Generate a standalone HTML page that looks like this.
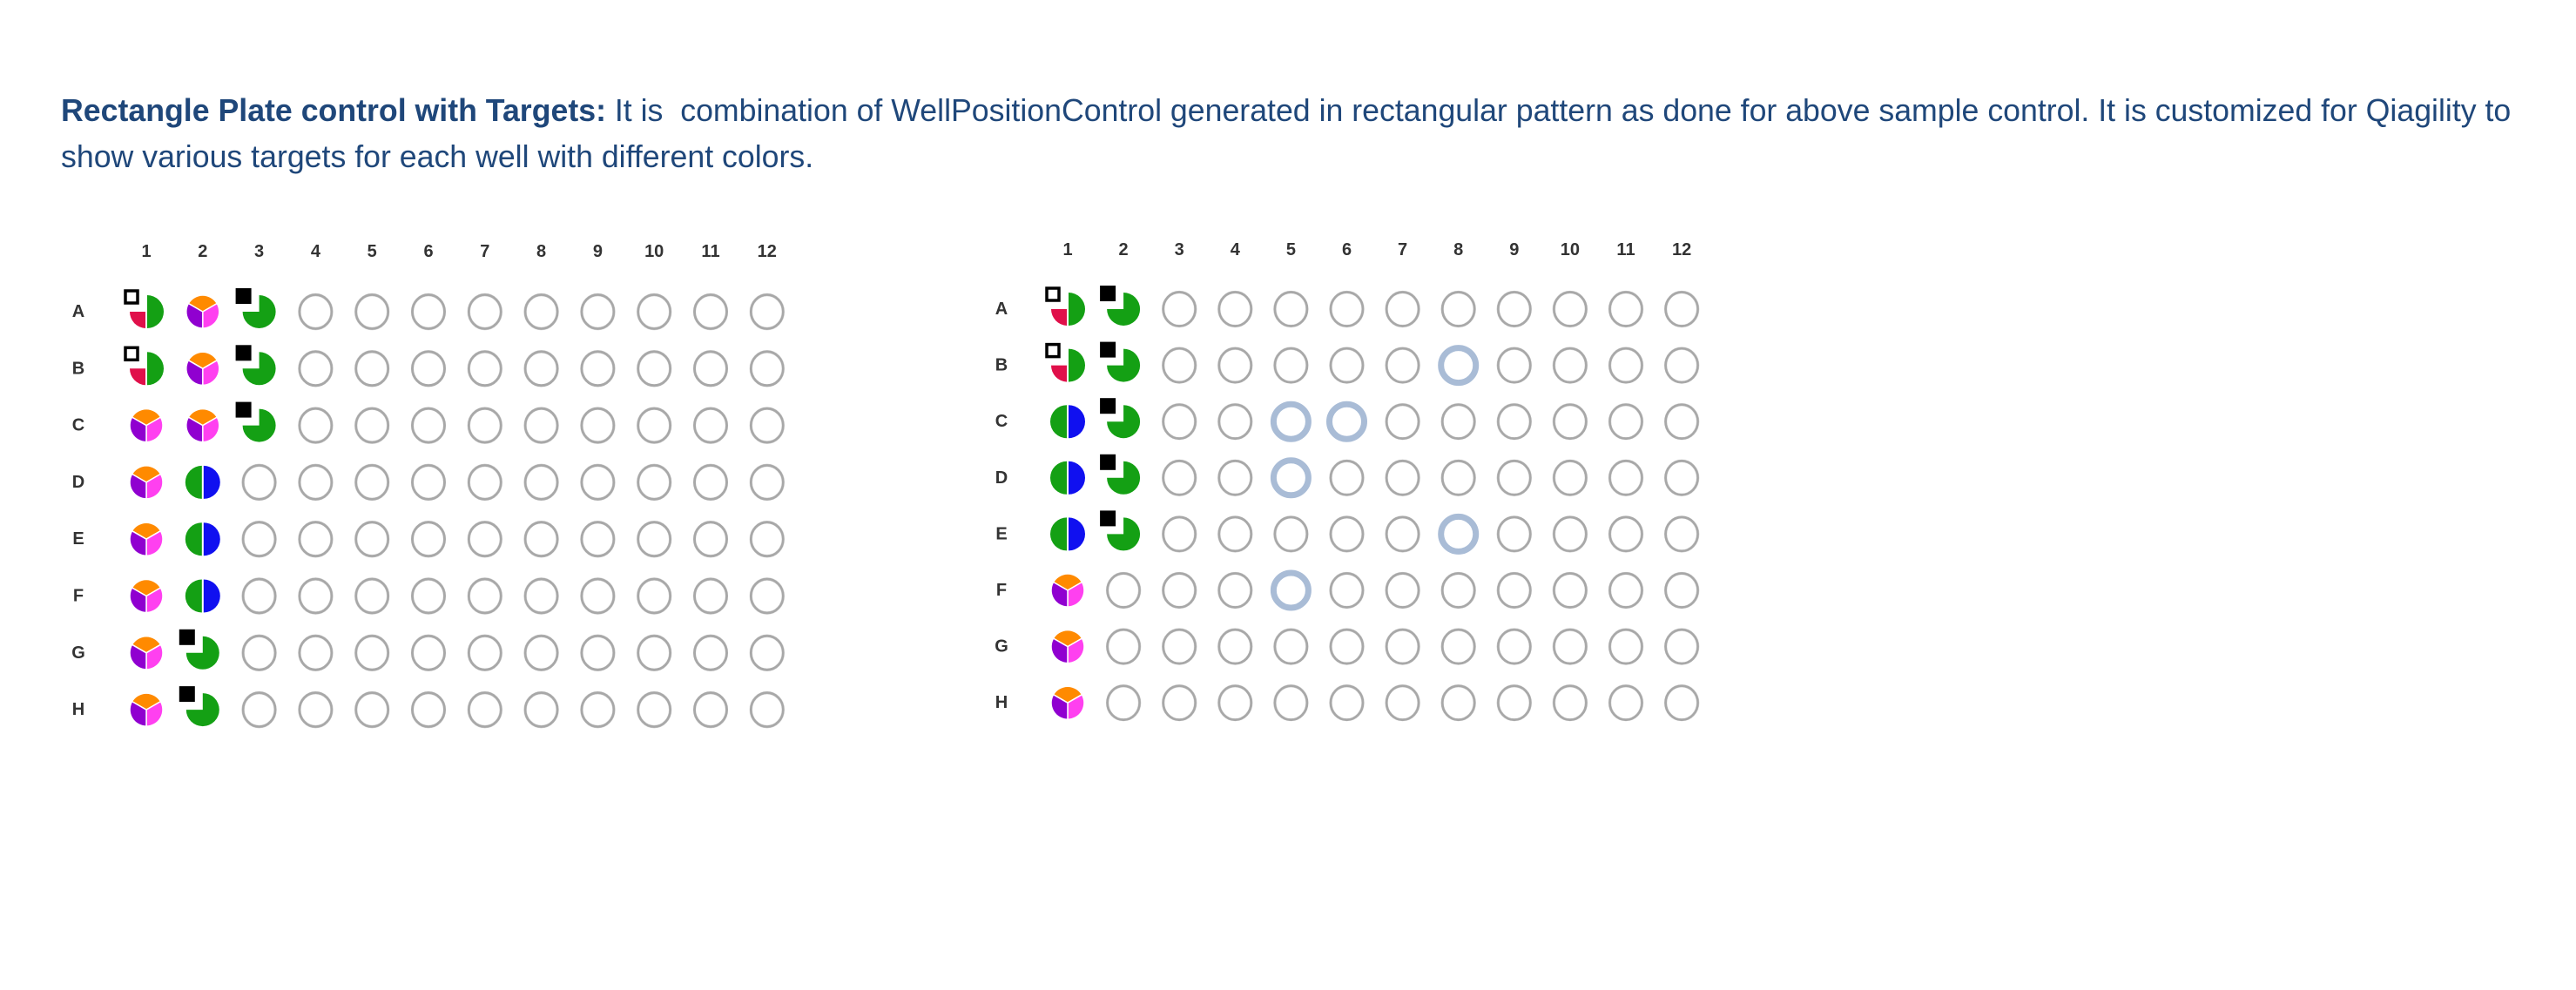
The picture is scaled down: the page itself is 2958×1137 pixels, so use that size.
<!DOCTYPE html>
<html><head><meta charset="utf-8">
<style>
html,body{margin:0;padding:0;background:#fff;width:2958px;height:1137px;overflow:hidden}
p{position:absolute;left:70px;top:101px;margin:0;font-family:"Liberation Sans",Arial,sans-serif;font-size:35.7px;line-height:53px;color:#1f477a;white-space:nowrap}
svg{position:absolute;left:0;top:0}
.l{font-family:"Liberation Sans",Arial,sans-serif;font-weight:bold;font-size:20px;fill:#333;text-anchor:middle;dominant-baseline:central}
</style></head><body>
<p><b>Rectangle Plate control with Targets:</b> It is&nbsp; combination of WellPositionControl generated in rectangular pattern as done for above sample control. It is customized for Qiagility to<br>show various targets for each well with different colors.</p>
<svg width="2958" height="1137" viewBox="0 0 2958 1137">
<defs>
<pattern id="pL" patternUnits="userSpaceOnUse" x="135.6" y="325.35" width="64.8" height="65.3"><ellipse cx="32.4" cy="32.65" rx="18.5" ry="19.5" fill="none" stroke="#a8a8a8" stroke-width="3"/></pattern>
<pattern id="pR" patternUnits="userSpaceOnUse" x="1193.95" y="322.7" width="64.1" height="64.6"><ellipse cx="32.05" cy="32.3" rx="18.5" ry="19.5" fill="none" stroke="#a8a8a8" stroke-width="3"/></pattern>
<g id="bg"><circle r="23" fill="#fff"/></g>
<g id="tri"><use href="#bg"/>
<path d="M0,0 L-16.45,-9.5 A19,19 0 0 1 16.45,-9.5 Z" fill="#ff8a00" stroke="#fff" stroke-width="1.5"/>
<path d="M0,0 L16.45,-9.5 A19,19 0 0 1 0,19 Z" fill="#ff40f0" stroke="#fff" stroke-width="1.5"/>
<path d="M0,0 L0,19 A19,19 0 0 1 -16.45,-9.5 Z" fill="#9000d0" stroke="#fff" stroke-width="1.5"/></g>
<g id="rg"><use href="#bg"/>
<path d="M1,-19 A19,19 0 0 1 1,19 Z" fill="#14a014"/>
<path d="M-1,0 L-1,19 A19,19 0 0 1 -19,0 Z" fill="#e0104a"/>
<rect x="-24" y="-24" width="14" height="14" fill="#fff" stroke="#000" stroke-width="3.5"/></g>
<g id="gb"><use href="#bg"/>
<path d="M-1,-19 A19,19 0 0 0 -1,19 Z" fill="#14a014"/>
<path d="M1,-19 A19,19 0 0 1 1,19 Z" fill="#1010f0"/></g>
<g id="gq"><use href="#bg"/>
<path d="M0,0 L0,-19 A19,19 0 1 1 -19,0 Z" fill="#14a014"/>
<rect x="-27" y="-27" width="18" height="18" fill="#000"/></g>
<g id="hl"><circle r="26" fill="#fff"/><circle r="20" fill="none" stroke="#a9bcd6" stroke-width="7"/></g>
</defs>
<rect x="135.6" y="325.35" width="777.6" height="522.4" fill="url(#pL)"/>
<rect x="1193.95" y="322.7" width="769.2" height="516.8" fill="url(#pR)"/>
<g class="l">
<text x="168" y="289">1</text><text x="232.8" y="289">2</text><text x="297.6" y="289">3</text><text x="362.4" y="289">4</text><text x="427.2" y="289">5</text><text x="492" y="289">6</text><text x="556.8" y="289">7</text><text x="621.6" y="289">8</text><text x="686.4" y="289">9</text><text x="751.2" y="289">10</text><text x="816" y="289">11</text><text x="880.8" y="289">12</text>
<text x="90" y="358">A</text><text x="90" y="423.3">B</text><text x="90" y="488.6">C</text><text x="90" y="553.9">D</text><text x="90" y="619.2">E</text><text x="90" y="684.5">F</text><text x="90" y="749.8">G</text><text x="90" y="815.1">H</text>
</g>
<g class="l">
<text x="1226" y="287">1</text><text x="1290.1" y="287">2</text><text x="1354.2" y="287">3</text><text x="1418.3" y="287">4</text><text x="1482.4" y="287">5</text><text x="1546.5" y="287">6</text><text x="1610.6" y="287">7</text><text x="1674.7" y="287">8</text><text x="1738.8" y="287">9</text><text x="1802.9" y="287">10</text><text x="1867" y="287">11</text><text x="1931.1" y="287">12</text>
<text x="1150" y="355">A</text><text x="1150" y="419.6">B</text><text x="1150" y="484.2">C</text><text x="1150" y="548.8">D</text><text x="1150" y="613.4">E</text><text x="1150" y="678">F</text><text x="1150" y="742.6">G</text><text x="1150" y="807.2">H</text>
</g>
<use href="#rg" x="168" y="358"/><use href="#tri" x="232.8" y="358"/><use href="#gq" x="297.6" y="358"/>
<use href="#rg" x="168" y="423.3"/><use href="#tri" x="232.8" y="423.3"/><use href="#gq" x="297.6" y="423.3"/>
<use href="#tri" x="168" y="488.6"/><use href="#tri" x="232.8" y="488.6"/><use href="#gq" x="297.6" y="488.6"/>
<use href="#tri" x="168" y="553.9"/><use href="#gb" x="232.8" y="553.9"/>
<use href="#tri" x="168" y="619.2"/><use href="#gb" x="232.8" y="619.2"/>
<use href="#tri" x="168" y="684.5"/><use href="#gb" x="232.8" y="684.5"/>
<use href="#tri" x="168" y="749.8"/><use href="#gq" x="232.8" y="749.8"/>
<use href="#tri" x="168" y="815.1"/><use href="#gq" x="232.8" y="815.1"/>
<use href="#rg" x="1226" y="355"/><use href="#gq" x="1290.1" y="355"/>
<use href="#rg" x="1226" y="419.6"/><use href="#gq" x="1290.1" y="419.6"/><use href="#hl" x="1674.7" y="419.6"/>
<use href="#gb" x="1226" y="484.2"/><use href="#gq" x="1290.1" y="484.2"/><use href="#hl" x="1482.4" y="484.2"/><use href="#hl" x="1546.5" y="484.2"/>
<use href="#gb" x="1226" y="548.8"/><use href="#gq" x="1290.1" y="548.8"/><use href="#hl" x="1482.4" y="548.8"/>
<use href="#gb" x="1226" y="613.4"/><use href="#gq" x="1290.1" y="613.4"/><use href="#hl" x="1674.7" y="613.4"/>
<use href="#tri" x="1226" y="678"/><use href="#hl" x="1482.4" y="678"/>
<use href="#tri" x="1226" y="742.6"/>
<use href="#tri" x="1226" y="807.2"/>
</svg>
</body></html>
